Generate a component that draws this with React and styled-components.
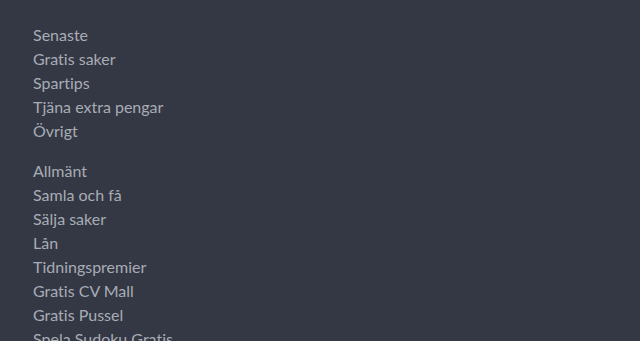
import React from "react";
import styled, { createGlobalStyle } from "styled-components";

const Global = createGlobalStyle`
  html, body { margin: 0; padding: 0; background: #343844; height: 100%; overflow: hidden; }
  body { font-family: Lato, "Noto Sans", sans-serif; }
  #root { height: 100%; }
`;

const Scroller = styled.div`
  height: 100vh;
  overflow-y: scroll;
  background: #343844;

  &::-webkit-scrollbar { width: 15px; background: #fafafa; }
  &::-webkit-scrollbar-track { background: #fafafa; }
  &::-webkit-scrollbar-thumb {
    background: #909090;
    border-radius: 8px;
    border: 4px solid #fafafa;
    min-height: 24px;
  }
  &::-webkit-scrollbar-button:single-button { height: 15px; background: #fafafa; }
`;

const Page = styled.div`
  min-height: 6600px;
  padding: 23px 33px;
  box-sizing: border-box;
`;

const Nav = styled.nav`
  display: flex;
  flex-direction: column;
  gap: 16px;
`;

const Group = styled.ul`
  list-style: none;
  margin: 0;
  padding: 0;
  display: flex;
  flex-direction: column;
`;

const Item = styled.li`
  font-size: 16px;
  line-height: 24px;
  color: #a8acb5;
  white-space: nowrap;
  font-variant-ligatures: none;
`;

const groups = [
  ["Senaste", "Gratis saker", "Spartips", "Tjäna extra pengar", "Övrigt"],
  [
    "Allmänt",
    "Samla och få",
    "Sälja saker",
    "Lån",
    "Tidningspremier",
    "Gratis CV Mall",
    "Gratis Pussel",
    "Spela Sudoku Gratis",
  ],
];

export default function App() {
  return (
    <>
      <Global />
      <Scroller>
        <Page>
          <Nav>
            {groups.map((g, i) => (
              <Group key={i}>
                {g.map((t) => (
                  <Item key={t}>{t}</Item>
                ))}
              </Group>
            ))}
          </Nav>
        </Page>
      </Scroller>
    </>
  );
}
